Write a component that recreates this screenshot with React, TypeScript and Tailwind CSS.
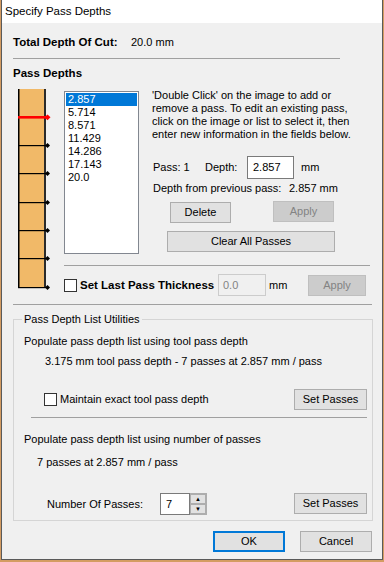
const font = { fontFamily: '"Liberation Sans", Arial, sans-serif' };

const Btn = ({ label, className = "", disabled = false }: { label: string; className?: string; disabled?: boolean }) => (
  <div
    className={`flex items-center justify-center h-[21px] text-[11px] leading-[13px] border ${
      disabled ? "bg-[#cccccc] border-[#bfbfbf] text-[#838383]" : "bg-[#e1e1e1] border-[#adadad] text-black"
    } ${className}`}
  >
    {label}
  </div>
);

const Check = () => <div className="w-[13px] h-[13px] bg-white border border-[#333333] shrink-0" />;

const Ruler = () => {
  const ticks = [56, 84, 113, 141, 169, 198];
  return (
    <svg width="34" height="201" viewBox="0 0 34 201" className="ml-[4px] shrink-0">
      <rect x="1" y="0" width="27" height="199" fill="#f1b968" />
      <rect x="1" y="0" width="1.5" height="199" fill="#000" />
      <rect x="27" y="0" width="2" height="199" fill="#2b2b2b" />
      {ticks.map((y) => (
        <g key={y}>
          <rect x="1" y={y} width="28" height="1.2" fill="#000" />
          <polygon points={`${30.5},${y - 2} ${33},${y + 0.6} ${30.5},${y + 3} ${28},${y + 0.6}`} fill="#000" />
        </g>
      ))}
      <rect x="1" y="27" width="28" height="2.6" fill="#ff0000" />
      <polygon points="30.5,25.5 33.5,28.3 30.5,31.2 27.5,28.3" fill="#ff0000" />
    </svg>
  );
};

export default function App() {
  const items = ["2.857", "5.714", "8.571", "11.429", "14.286", "17.143", "20.0"];
  return (
    <div className="w-[384px] h-[562px] bg-[#d49c62] overflow-hidden" style={font}>
      <div className="ml-[1px] w-[382px] h-[560px] bg-[#f0f0f0] border-l border-r border-b border-[#5a5a5a] flex flex-col">
        <div className="h-[23px] bg-white flex items-center pl-[3px] text-[11.5px] text-black">Specify Pass Depths</div>
        <div className="pl-[11px] flex flex-col text-[11px] leading-[13px] text-black">
          <div className="mt-[12px] flex items-center h-[14px]">
            <span className="font-bold text-[11.5px] w-[118px]">Total Depth Of Cut:</span>
            <span>20.0 mm</span>
          </div>
          <div className="mt-[9px] w-[327px] h-px bg-[#a0a0a0]" />
          <div className="mt-[7px] h-[14px] font-bold text-[11.5px] leading-[14px]">Pass Depths</div>

          <div className="mt-[9px] flex items-start">
            <Ruler />
            <div className="ml-[13px] flex flex-col">
              <div className="flex items-start">
                <div className="mt-[2px] w-[75px] h-[163px] bg-white border border-[#828790] p-[1px] flex flex-col">
                  {items.map((v, i) => (
                    <div
                      key={v}
                      className={`h-[13px] pl-[2px] leading-[13px] ${i === 0 ? "bg-[#0078d7] text-white" : "text-black"}`}
                    >
                      {v}
                    </div>
                  ))}
                </div>
                <div className="ml-[13px] flex flex-col">
                  <p>
                    'Double Click' on the image to add or
                    <br />
                    remove a pass. To edit an existing pass,
                    <br />
                    click on the image or list to select it, then
                    <br />
                    enter new information in the fields below.
                  </p>
                  <div className="mt-[15px] ml-[1px] flex items-center h-[23px]">
                    <span className="w-[52px]">Pass: 1</span>
                    <span className="w-[42px]">Depth:</span>
                    <div className="w-[47px] h-[23px] bg-white border border-[#7a7a7a] flex items-center pl-[5px]">2.857</div>
                    <span className="ml-[7px]">mm</span>
                  </div>
                  <div className="mt-[3px] ml-[1px] flex">
                    <span className="w-[136px]">Depth from previous pass:</span>
                    <span>2.857 mm</span>
                  </div>
                  <div className="mt-[6px] flex items-start">
                    <Btn label="Delete" className="mt-[1px] ml-[18px] w-[61px]" />
                    <Btn label="Apply" disabled className="ml-[42px] w-[61px]" />
                  </div>
                  <Btn label="Clear All Passes" className="mt-[8px] ml-[15px] w-[168px]" />
                </div>
              </div>
              <div className="mt-[11px] w-[306px] h-px bg-[#a0a0a0]" />
              <div className="mt-[8px] flex items-center h-[22px]">
                <Check />
                <span className="ml-[3px] w-[138px] font-bold text-[11.5px]">Set Last Pass Thickness</span>
                <div className="w-[48px] h-[22px] border border-[#cccccc] flex items-center pl-[4px] text-[#838383]">0.0</div>
                <span className="ml-[3px] w-[39px]">mm</span>
                <Btn label="Apply" disabled className="w-[58px]" />
              </div>
            </div>
          </div>

          <div className="mt-[8px] w-[359px] h-px bg-[#a0a0a0]" />

          <fieldset className="mt-[8px] w-[359px] border border-[#d5d5d5] pl-[10px] pr-[5px] pb-[5px]">
            <legend className="ml-[-2px] px-[2px] leading-[13px]">Pass Depth List Utilities</legend>
            <div className="mt-[9px]">Populate pass depth list using tool pass depth</div>
            <div className="mt-[7px] ml-[21px]">3.175 mm tool pass depth - 7 passes at 2.857 mm / pass</div>
            <div className="mt-[21px] flex items-center h-[21px]">
              <div className="ml-[20px]">
                <Check />
              </div>
              <span className="ml-[3px]">Maintain exact tool pass depth</span>
              <Btn label="Set Passes" className="ml-auto w-[73px]" />
            </div>
            <div className="mt-[7px] ml-[7px] w-[336px] h-px bg-[#a0a0a0]" />
            <div className="mt-[15px]">Populate pass depth list using number of passes</div>
            <div className="mt-[10px] ml-[13px]">7 passes at 2.857 mm / pass</div>
            <div className="mt-[24px] flex items-start h-[22px]">
              <span className="ml-[23px] w-[113px] self-center">Number Of Passes:</span>
              <div className="flex h-[22px]">
                <div className="w-[30px] h-[22px] bg-white border border-[#7a7a7a] flex items-center pl-[5px]">7</div>
                <div className="w-[17px] flex flex-col border border-[#adadad] border-l-0">
                  <div className="h-[10px] bg-[#e1e1e1] border border-[#adadad] flex items-center justify-center text-[6px] leading-none">▲</div>
                  <div className="h-[10px] bg-[#e1e1e1] border border-[#adadad] flex items-center justify-center text-[6px] leading-none">▼</div>
                </div>
              </div>
              <Btn label="Set Passes" className="ml-auto w-[73px]" />
            </div>
          </fieldset>

          <div className="mt-[10px] flex justify-end pr-[10px] gap-[15px]">
            <div className="w-[72px] h-[21px] bg-[#e1e1e1] border-2 border-[#0078d7] flex items-center justify-center">OK</div>
            <Btn label="Cancel" className="w-[72px]" />
          </div>
        </div>
      </div>
    </div>
  );
}
